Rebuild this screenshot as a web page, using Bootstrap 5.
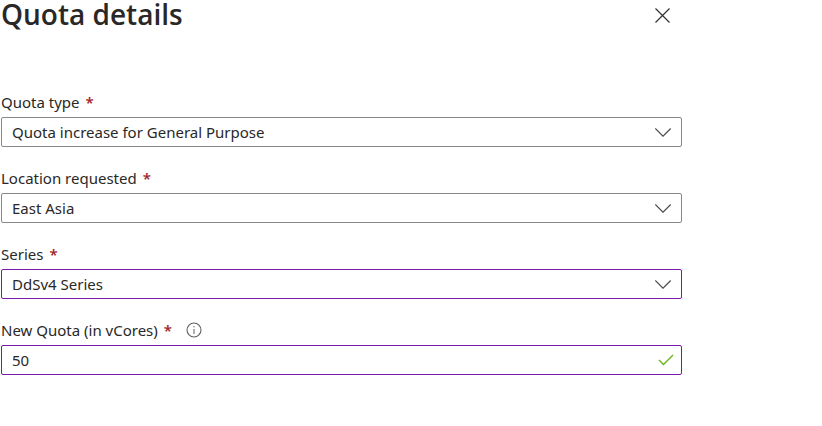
<!DOCTYPE html>
<html lang="en">
<head>
<meta charset="utf-8">
<meta name="viewport" content="width=device-width, initial-scale=1">
<title>Quota details</title>
<link href="https://cdn.jsdelivr.net/npm/bootstrap@5.3.0/dist/css/bootstrap.min.css" rel="stylesheet">
<style>
body { font-family: "Segoe UI", "Noto Sans", "Open Sans", sans-serif; font-size: 15px; color: #292827; background: #fff; }
.panel { padding: 0 140px 0 1px; }
.panel-head { height: 32px; margin-bottom: 60px; }
.panel-title { font-family: "Segoe UI", "Open Sans", sans-serif; font-size: 28px; line-height: 28px; font-weight: 600; }
.panel-close { width: 38px; height: 32px; color: #323130; }
.field + .field { margin-top: 21px; }
.field-head { height: 20px; line-height: 20px; margin-bottom: 5px; gap: 6px; }
.req { color: #a4262c; font-weight: 600; }
.field .form-select, .field .form-control { height: 30px; padding: 0 40px 0 10px; font-size: 15px; line-height: 28px; color: #292827; border: 1px solid #8a8886; border-radius: 2px; background-image: none; box-shadow: none; }
.field .edited { border-color: #7719aa; }
.box-icon { pointer-events: none; right: 10px; color: #4f4d4b; }
.box-ok { right: 8px; color: #6bb41a; }
.info { color: #605e5c; margin-left: 8px; }
</style>
</head>
<body>
<main class="panel">
  <header class="panel-head d-flex align-items-start justify-content-between">
    <h1 class="panel-title m-0">Quota details</h1>
    <button type="button" class="panel-close btn border-0 p-0 d-flex align-items-center justify-content-center" aria-label="Close">
      <svg width="16" height="16" viewBox="0 0 16 16" fill="none" stroke="currentColor" stroke-width="1.2" aria-hidden="true"><path d="M.5 .5l14 14M14.500 .5L.5 14.500"/></svg>
    </button>
  </header>
  <form>
    <div class="field">
      <div class="field-head d-flex align-items-center"><label for="type">Quota type</label><span class="req">*</span></div>
      <div class="position-relative d-flex align-items-center">
        <select id="type" class="form-select" required><option>Quota increase for General Purpose</option></select>
        <svg class="box-icon position-absolute" width="17" height="10" viewBox="0 0 17 10" fill="none" stroke="currentColor" stroke-width="1.2" aria-hidden="true"><path d="M.3 1.500l7.700 7.700L15.700 1.500"/></svg>
      </div>
    </div>
    <div class="field">
      <div class="field-head d-flex align-items-center"><label for="location">Location requested</label><span class="req">*</span></div>
      <div class="position-relative d-flex align-items-center">
        <select id="location" class="form-select" required><option>East Asia</option></select>
        <svg class="box-icon position-absolute" width="17" height="10" viewBox="0 0 17 10" fill="none" stroke="currentColor" stroke-width="1.2" aria-hidden="true"><path d="M.3 1.500l7.700 7.700L15.700 1.500"/></svg>
      </div>
    </div>
    <div class="field">
      <div class="field-head d-flex align-items-center"><label for="series">Series</label><span class="req">*</span></div>
      <div class="position-relative d-flex align-items-center">
        <select id="series" class="form-select edited" required><option>DdSv4 Series</option></select>
        <svg class="box-icon position-absolute" width="17" height="10" viewBox="0 0 17 10" fill="none" stroke="currentColor" stroke-width="1.2" aria-hidden="true"><path d="M.3 1.500l7.700 7.700L15.700 1.500"/></svg>
      </div>
    </div>
    <div class="field">
      <div class="field-head d-flex align-items-center"><label for="quota">New Quota (in vCores)</label><span class="req">*</span>
        <svg class="info" width="16" height="16" viewBox="0 0 16 16" fill="none" stroke="currentColor" role="img" aria-label="Information"><circle cx="8" cy="8" r="7" stroke-width="1.1"/><path d="M8 7v5M8 4v1.300"/></svg>
      </div>
      <div class="position-relative d-flex align-items-center">
        <input id="quota" type="text" class="form-control edited" value="50" required>
        <svg class="box-icon box-ok position-absolute" width="16" height="12" viewBox="0 0 16 12" fill="none" stroke="currentColor" stroke-width="1.4" aria-hidden="true"><path d="M1 6l4.500 4.500L15 1"/></svg>
      </div>
    </div>
  </form>
</main>
<script src="https://cdn.jsdelivr.net/npm/bootstrap@5.3.0/dist/js/bootstrap.bundle.min.js"></script>
</body>
</html>
